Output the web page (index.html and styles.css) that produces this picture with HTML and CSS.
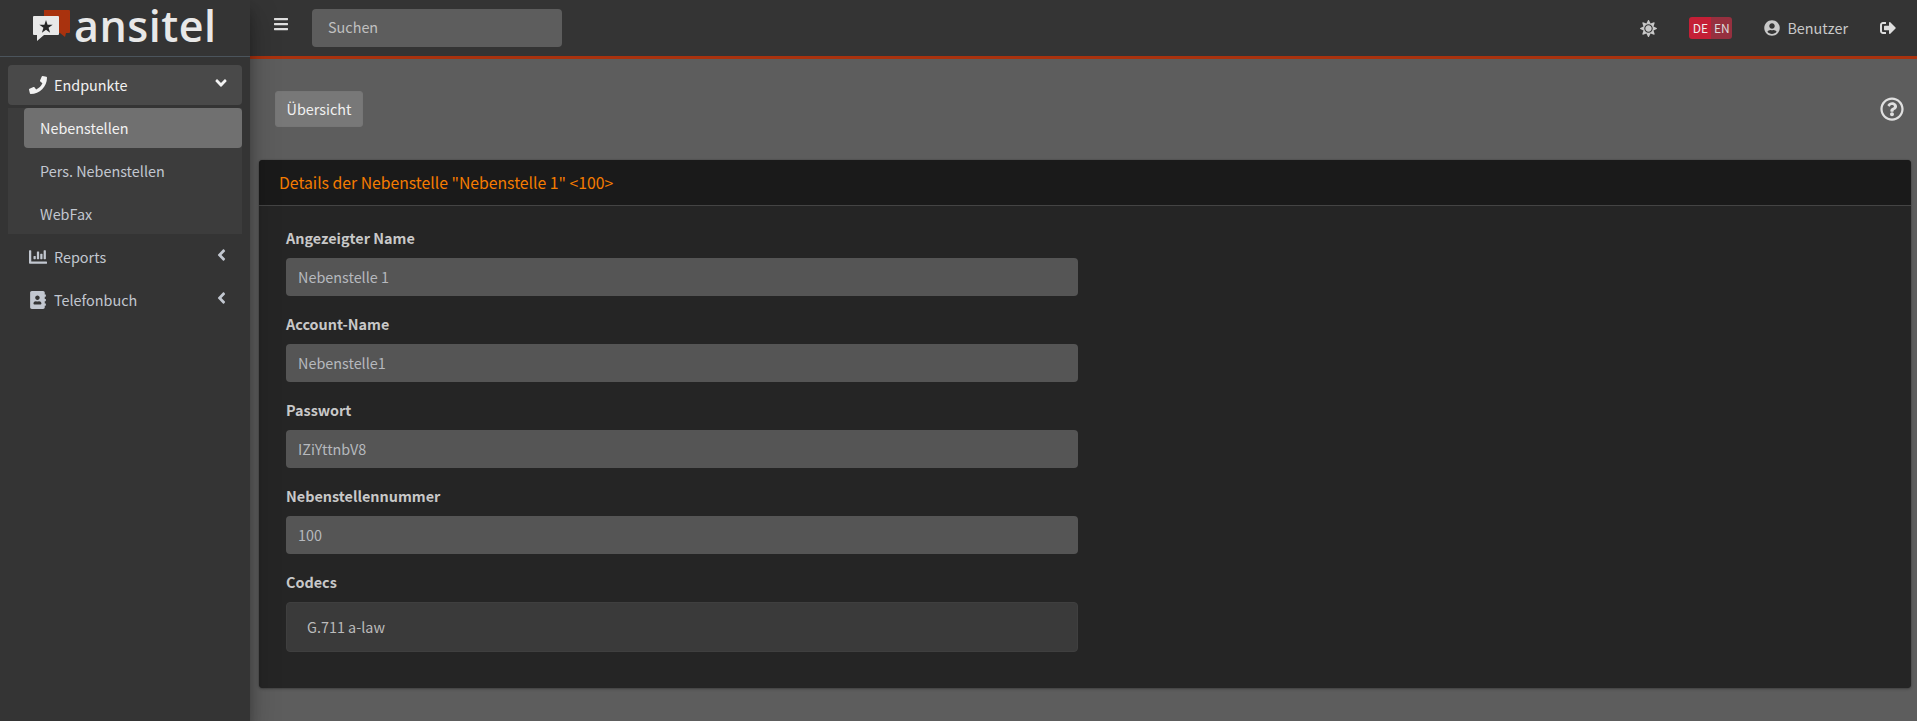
FILE: index.html
```html
<!DOCTYPE html>
<html lang="de">
<head>
<meta charset="utf-8">
<title>ansitel</title>
<link rel="stylesheet" href="styles.css">
</head>
<body>
<div class="wrapper">
  <aside class="sidebar">
    <a class="brand">
      <svg class="brand-mark" viewBox="0 0 39 33" width="39" height="33" aria-hidden="true">
        <path fill="#a9320e" d="M12 1h25a1 1 0 0 1 1 1v21a1 1 0 0 1-1 1h-3l-1 4-5-4H12z"/>
        <path fill="#e8e8e8" d="M2 7h24a1 1 0 0 1 1 1v17a1 1 0 0 1-1 1H12l-7 6v-6H2a1 1 0 0 1-1-1V8a1 1 0 0 1 1-1z"/>
        <polygon fill="#262626" points="14,11 15.59,15.82 20.66,15.84 16.57,18.83 18.11,23.66 14,20.7 9.89,23.66 11.43,18.83 7.34,15.84 12.41,15.82"/>
      </svg>
      <span class="brand-text">ansitel</span>
    </a>
    <nav class="nav">
      <a class="nav-link open">
        <svg class="nav-icon" viewBox="0 0 512 512"><path d="M493.4 24.6l-104-24c-11.3-2.6-22.9 3.3-27.5 13.9l-48 112c-4.2 9.8-1.4 21.3 6.9 28l60.6 49.6c-36 76.7-98.9 140.5-177.2 177.2l-49.6-60.6c-6.8-8.3-18.2-11.1-28-6.9l-112 48C3.9 366.5-2 378.1.6 389.4l24 104C27.1 504.2 36.7 512 48 512c256.1 0 464-207.5 464-464 0-11.2-7.7-20.9-18.6-23.4z"/></svg>
        <span class="nav-label">Endpunkte</span>
        <svg class="caret-down" viewBox="0 0 320 512"><path d="M143 352.3L7 216.3c-9.4-9.4-9.4-24.6 0-33.9l22.6-22.6c9.4-9.4 24.6-9.4 33.9 0l96.4 96.4 96.4-96.4c9.4-9.4 24.6-9.4 33.9 0l22.6 22.6c9.4 9.4 9.4 24.6 0 33.9l-136 136c-9.2 9.4-24.4 9.4-33.8 0z"/></svg>
      </a>
      <div class="subnav">
        <a class="sub-link active">Nebenstellen</a>
        <a class="sub-link">Pers. Nebenstellen</a>
        <a class="sub-link">WebFax</a>
      </div>
      <a class="nav-link">
        <svg class="nav-icon" viewBox="0 0 512 512"><path d="M332.8 320h38.4c6.4 0 12.8-6.4 12.8-12.8V172.8c0-6.4-6.4-12.8-12.8-12.8h-38.4c-6.4 0-12.8 6.4-12.8 12.8v134.4c0 6.4 6.4 12.8 12.8 12.8zm96 0h38.4c6.4 0 12.8-6.4 12.8-12.8V76.8c0-6.4-6.4-12.8-12.8-12.8h-38.4c-6.4 0-12.8 6.4-12.8 12.8v230.4c0 6.4 6.4 12.8 12.8 12.8zm-288 0h38.4c6.4 0 12.8-6.4 12.8-12.8v-70.4c0-6.4-6.4-12.8-12.8-12.8h-38.4c-6.4 0-12.8 6.4-12.8 12.8v70.4c0 6.4 6.4 12.8 12.8 12.8zm96 0h38.4c6.4 0 12.8-6.4 12.8-12.8V108.8c0-6.4-6.4-12.8-12.8-12.8h-38.4c-6.4 0-12.8 6.4-12.8 12.8v198.4c0 6.4 6.4 12.8 12.8 12.8zM496 384H64V80c0-8.84-7.16-16-16-16H16C7.16 64 0 71.16 0 80v336c0 17.67 14.33 32 32 32h464c8.84 0 16-7.16 16-16v-32c0-8.84-7.16-16-16-16z"/></svg>
        <span class="nav-label">Reports</span>
        <svg class="caret-left" viewBox="0 0 256 512"><path d="M31.7 239l136-136c9.4-9.4 24.6-9.4 33.9 0l22.6 22.6c9.4 9.4 9.4 24.6 0 33.9L127.9 256l96.4 96.4c9.4 9.4 9.4 24.6 0 33.9L201.7 409c-9.4 9.4-24.6 9.4-33.9 0l-136-136c-9.5-9.4-9.5-24.6-.1-34z"/></svg>
      </a>
      <a class="nav-link">
        <svg class="nav-icon" viewBox="0 0 448 512"><path d="M436 160c6.6 0 12-5.4 12-12v-40c0-6.6-5.4-12-12-12h-20V48c0-26.5-21.5-48-48-48H48C21.5 0 0 21.5 0 48v416c0 26.5 21.5 48 48 48h320c26.5 0 48-21.5 48-48v-48h20c6.6 0 12-5.4 12-12v-40c0-6.6-5.4-12-12-12h-20v-64h20c6.6 0 12-5.4 12-12v-40c0-6.6-5.4-12-12-12h-20v-64h20zm-228-32c35.3 0 64 28.7 64 64s-28.7 64-64 64-64-28.7-64-64 28.7-64 64-64zm112 236.8c0 10.6-10 19.2-22.4 19.2H118.4C106 384 96 375.4 96 364.8v-19.2c0-31.8 30.1-57.6 67.2-57.6h5c12.3 5.1 25.7 8 39.8 8s27.6-2.9 39.8-8h5c37.1 0 67.2 25.8 67.2 57.6v19.2z"/></svg>
        <span class="nav-label">Telefonbuch</span>
        <svg class="caret-left" viewBox="0 0 256 512"><path d="M31.7 239l136-136c9.4-9.4 24.6-9.4 33.9 0l22.6 22.6c9.4 9.4 9.4 24.6 0 33.9L127.9 256l96.4 96.4c9.4 9.4 9.4 24.6 0 33.9L201.7 409c-9.4 9.4-24.6 9.4-33.9 0l-136-136c-9.5-9.4-9.5-24.6-.1-34z"/></svg>
      </a>
    </nav>
  </aside>
  <div class="main">
    <header class="topbar">
      <svg class="bars" viewBox="0 0 448 512"><path d="M16 132h416c8.837 0 16-7.163 16-16V76c0-8.837-7.163-16-16-16H16C7.163 60 0 67.163 0 76v40c0 8.837 7.163 16 16 16zm0 160h416c8.837 0 16-7.163 16-16v-40c0-8.837-7.163-16-16-16H16c-8.837 0-16 7.163-16 16v40c0 8.837 7.163 16 16 16zm0 160h416c8.837 0 16-7.163 16-16v-40c0-8.837-7.163-16-16-16H16c-8.837 0-16 7.163-16 16v40c0 8.837 7.163 16 16 16z"/></svg>
      <input class="search" type="text" placeholder="Suchen">
      <div class="topbar-right">
        <svg class="sun" viewBox="0 0 512 512"><path d="M256 160c-52.9 0-96 43.1-96 96s43.1 96 96 96 96-43.1 96-96-43.1-96-96-96zm246.4 80.5l-94.7-47.3 33.5-100.4c4.5-13.6-8.4-26.5-21.9-21.9l-100.4 33.5-47.4-94.8c-6.4-12.8-24.6-12.8-31 0l-47.3 94.7L92.7 70.8c-13.6-4.5-26.5 8.4-21.9 21.9l33.5 100.4-94.7 47.4c-12.8 6.4-12.8 24.6 0 31l94.7 47.3-33.5 100.5c-4.5 13.6 8.4 26.5 21.9 21.9l100.4-33.5 47.3 94.7c6.4 12.8 24.6 12.8 31 0l47.3-94.7 100.4 33.5c13.6 4.5 26.5-8.4 21.9-21.9l-33.5-100.4 94.7-47.3c13-6.5 13-24.7.2-31.1zm-155.9 106c-49.9 49.9-131.1 49.9-181 0-49.9-49.9-49.9-131.1 0-181 49.9-49.9 131.1-49.9 181 0 49.9 49.9 49.9 131.1 0 181z"/></svg>
        <div class="lang"><span class="lang-de">DE</span><span class="lang-en">EN</span></div>
        <div class="user">
          <svg class="user-icon" viewBox="0 0 496 512"><path d="M248 8C111 8 0 119 0 256s111 248 248 248 248-111 248-248S385 8 248 8zm0 96c48.6 0 88 39.4 88 88s-39.4 88-88 88-88-39.4-88-88 39.4-88 88-88zm0 344c-58.7 0-111.3-26.6-146.5-68.2 18.8-35.4 55.6-59.8 98.5-59.8 2.4 0 4.8.4 7.1 1.1 13 4.2 26.6 6.9 40.9 6.9 14.3 0 28-2.7 40.9-6.9 2.3-.7 4.7-1.1 7.1-1.1 42.9 0 79.7 24.4 98.5 59.8C359.3 421.4 306.7 448 248 448z"/></svg>
          <span>Benutzer</span>
        </div>
        <svg class="logout" viewBox="0 0 512 512"><path d="M497 273L329 441c-15 15-41 4.500-41-17v-96H152c-13.300 0-24-10.700-24-24v-96c0-13.300 10.700-24 24-24h136V88c0-21.400 25.900-32 41-17l168 168c9.300 9.400 9.300 24.600 0 34zM192 436v-40c0-6.600-5.400-12-12-12H96c-17.700 0-32-14.300-32-32V160c0-17.700 14.300-32 32-32h84c6.600 0 12-5.400 12-12V76c0-6.600-5.400-12-12-12H96c-53 0-96 43-96 96v192c0 53 43 96 96 96h84c6.600 0 12-5.400 12-12z"/></svg>
      </div>
    </header>
    <main class="content">
      <div class="toolbar">
        <button class="btn" type="button">Übersicht</button>
        <svg class="help" viewBox="0 0 512 512"><path d="M256 8C119.043 8 8 119.083 8 256c0 136.997 111.043 248 248 248s248-111.003 248-248C504 119.083 392.957 8 256 8zm0 448c-110.532 0-200-89.431-200-200 0-110.495 89.472-200 200-200 110.491 0 200 89.471 200 200 0 110.530-89.431 200-200 200zm107.244-255.200c0 67.052-72.421 68.084-72.421 92.863V300c0 6.627-5.373 12-12 12h-45.647c-6.627 0-12-5.373-12-12v-8.659c0-35.745 27.100-50.034 47.579-61.516 17.561-9.845 28.324-16.541 28.324-29.579 0-17.246-21.999-28.693-39.784-28.693-23.189 0-33.894 10.977-48.942 29.969-4.057 5.120-11.460 6.071-16.666 2.124l-27.824-21.098c-5.107-3.872-6.251-11.066-2.644-16.363C184.846 131.491 214.940 112 261.794 112c49.071 0 101.450 38.304 101.450 88.800zM298 368c0 23.159-18.841 42-42 42s-42-18.841-42-42 18.841-42 42-42 42 18.841 42 42z"/></svg>
      </div>
      <section class="card">
        <h3 class="card-title">Details der Nebenstelle "Nebenstelle 1" &lt;100&gt;</h3>
        <form class="card-body">
          <div class="field"><label>Angezeigter Name</label><input class="control" type="text" readonly value="Nebenstelle 1"></div>
          <div class="field"><label>Account-Name</label><input class="control" type="text" readonly value="Nebenstelle1"></div>
          <div class="field"><label>Passwort</label><input class="control" type="text" readonly value="IZiYttnbV8"></div>
          <div class="field"><label>Nebenstellennummer</label><input class="control" type="text" readonly value="100"></div>
          <div class="field"><label>Codecs</label><div class="multi">G.711 a-law</div></div>
        </form>
      </section>
    </main>
  </div>
</div>
</body>
</html>
```
FILE: styles.css
```css
* { box-sizing: border-box; }
html, body { margin: 0; height: 100%; overflow: hidden; }
body {
  font-family: "Noto Sans CJK SC", "Noto Sans", sans-serif;
  font-size: 14.4px;
  line-height: 24px;
  color: #c8c8c8;
  background: #5d5d5d;
}
.wrapper { display: flex; height: 721px; }

.sidebar {
  width: 250px;
  flex: none;
  background: #343434;
  position: relative;
  z-index: 2;
  box-shadow: 0 14px 28px rgba(0,0,0,.25), 0 10px 10px rgba(0,0,0,.22);
}
.brand {
  display: flex;
  align-items: center;
  height: 57px;
  padding: 0 0 0 32px;
  border-bottom: 1px solid #4b545c;
}
.brand-mark { flex: none; margin: 0 3px 5px 0; }
.brand-text {
  font-family: "Open Sans", sans-serif;
  font-size: 43px;
  line-height: 56px;
  font-weight: 600;
  letter-spacing: .5px;
  color: #e8e8e8;
  margin-bottom: 5px;
}
.nav { padding: 8px 8px 0; display: flex; flex-direction: column; gap: 3px; }
.nav-link {
  display: flex;
  align-items: center;
  height: 40px;
  padding: 0 15px 0 21px;
  border-radius: 4px;
  color: #c2c7d0;
}
.nav-link svg { fill: currentColor; flex: none; }
.nav-link.open { background: #494949; color: #f2f2f2; }
.nav-icon { width: 18px; height: 18px; margin-right: 7px; }
.nav-label { flex: 1; }
.caret-down { width: 12px; height: 18px; margin-top: -4px; }
.caret-left { width: 9px; height: 18px; margin: -4px 1px 0 0; }
.subnav { display: flex; flex-direction: column; gap: 3px; background: #3c3c3c; }
.sub-link {
  display: block;
  height: 40px;
  line-height: 40px;
  margin-left: 16px;
  padding-left: 16px;
  border-radius: 4px;
  color: #c2c7d0;
}
.sub-link.active { background: #707070; color: #f2f2f2; }

.main { flex: 1; min-width: 0; display: flex; flex-direction: column; }
.topbar {
  display: flex;
  align-items: center;
  height: 59px;
  flex: none;
  padding: 0 21px 1px 24px;
  background: #343434;
  border-bottom: 3px solid #a9320e;
}
.bars { width: 14px; height: 16px; fill: #dedede; margin: -8px 24px 0 0; flex: none; }
.search {
  width: 250px;
  height: 38px;
  padding: 0 16px 2px;
  background: #5d5d5d;
  border: 0;
  border-radius: 4px;
  font: inherit;
  color: #c8c8c8;
}
.search::placeholder { color: #c0c0c0; opacity: 1; }
.topbar-right { margin-left: auto; display: flex; align-items: center; color: #c8c8c8; }
.sun { width: 17px; height: 17px; fill: #c8c8c8; margin-top: 1px; }
.lang {
  display: flex;
  margin-left: 32px;
  height: 22px;
  border-radius: 3px;
  overflow: hidden;
  font-size: 12px;
  line-height: 22px;
  color: #eee;
}
.lang-de { background: #c41f36; width: 22px; text-align: center; }
.lang-en { background: #96303f; width: 21px; text-align: center; color: #ddd; }
.user { display: flex; align-items: center; margin-left: 32px; }
.user-icon { width: 16px; height: 16px; fill: #c8c8c8; margin-right: 7px; }
.logout { width: 16px; height: 16px; fill: #dedede; margin-left: 32px; }

.content { flex: 1; padding: 0 6px 0 9px; min-height: 0; }
.toolbar {
  display: flex;
  align-items: center;
  justify-content: space-between;
  height: 100px;
  margin-bottom: 1px;
  padding: 0 7px 0 16px;
}
.btn {
  height: 36px;
  width: 88px;
  padding: 0;
  background: #787878;
  border: 1px solid #767676;
  border-radius: 3px;
  font: inherit;
  color: #f0f0f0;
}
.help { width: 24px; height: 24px; fill: #e0e0e0; }
.card {
  background: #252525;
  border-radius: 4px;
  box-shadow: 0 0 1px rgba(0,0,0,.5), 0 1px 3px rgba(0,0,0,.3);
}
.card-title {
  margin: 0;
  height: 46px;
  padding: 0 20px;
  line-height: 45px;
  font-size: 15.75px;
  font-weight: 400;
  color: #f57c00;
  background: #1a1a1a;
  border-bottom: 1px solid #444;
  border-radius: 4px 4px 0 0;
}
.card-body { padding: 20px 28px 20px 27px; margin: 0; }
.field { width: 792px; margin-bottom: 16px; }
.field label { display: block; margin-bottom: 8px; font-weight: 700; color: #c8c8c8; }
.control {
  display: block;
  width: 100%;
  height: 38px;
  padding: 0 12px 2px;
  background: #555;
  border: 0;
  border-radius: 4px;
  font: inherit;
  color: #b6b9be;
}
.multi {
  height: 50px;
  padding: 0 20px;
  line-height: 47px;
  background: #3a3a3a;
  border: 1px solid #3f3f3f;
  border-radius: 4px;
  color: #bcbcbc;
}
```
